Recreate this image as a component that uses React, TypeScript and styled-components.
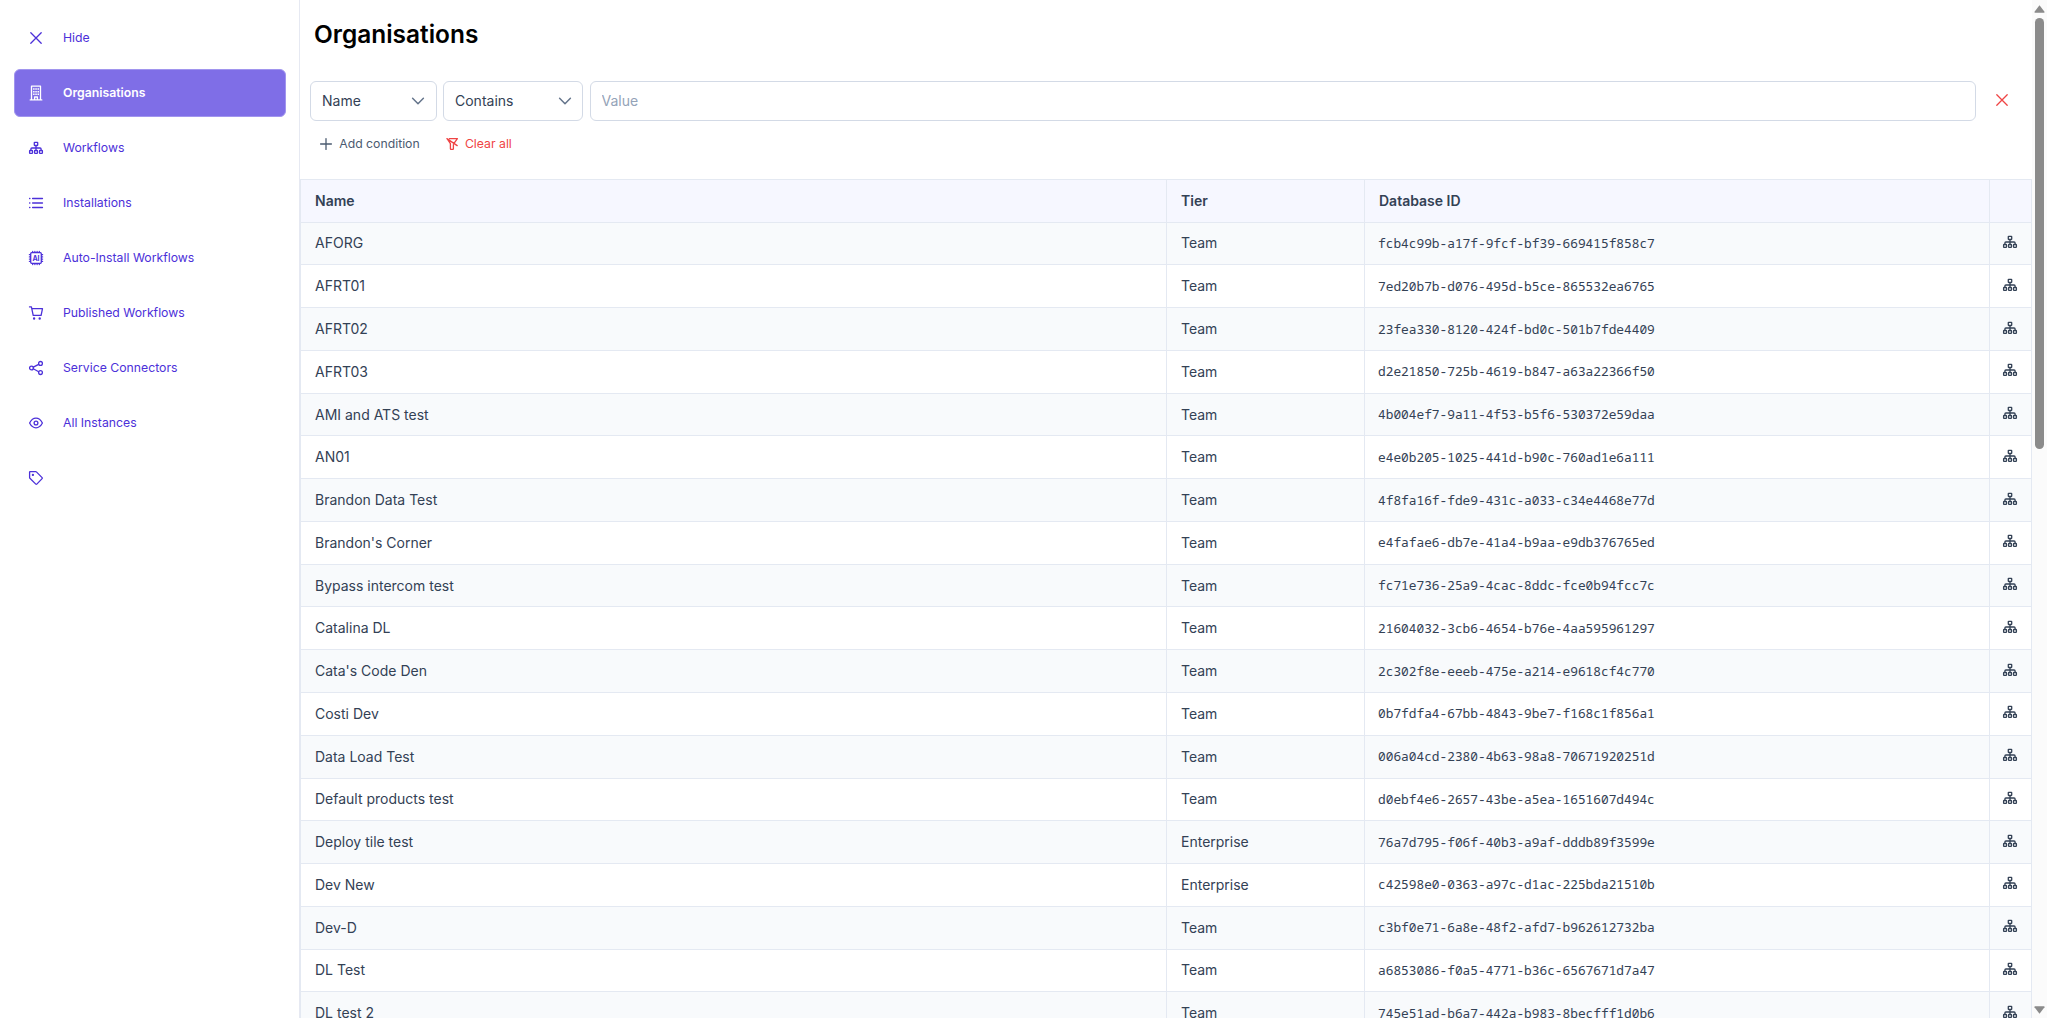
import React from 'react';
import styled, { createGlobalStyle } from 'styled-components';

const GlobalStyle = createGlobalStyle`
  *, *::before, *::after { box-sizing: border-box; }
  body {
    margin: 0;
    overflow: hidden;
    background: #fff;
    font-family: Inter, "Open Sans", sans-serif;
    font-size: 14px;
    color: #334155;
  }
`;

const Layout = styled.div`
  display: flex;
  height: 100vh;
  overflow: hidden;
`;

const Sidebar = styled.nav`
  flex: 0 0 300px;
  display: flex;
  flex-direction: column;
  gap: 6.5px;
  padding: 13.75px 13px 0 14px;
  border-right: 1px solid #e6e9f2;
`;

const NavItem = styled.a<{ $active?: boolean }>`
  display: flex;
  align-items: center;
  gap: 20px;
  height: 48.5px;
  padding: 0 14px;
  border: 1px solid ${(p) => (p.$active ? '#a195ee' : 'transparent')};
  border-radius: 6px;
  background: ${(p) => (p.$active ? '#7f6ee7' : 'transparent')};
  color: ${(p) => (p.$active ? '#fff' : '#4c30d9')};
  font-size: 12.25px;
  font-weight: ${(p) => (p.$active ? 600 : 400)};
  cursor: pointer;
`;

const NavLabel = styled.span`
  padding-bottom: 2px;
`;

const Icon = styled.svg<{ $size?: number }>`
  flex: none;
  display: block;
  width: ${(p) => p.$size ?? 14}px;
  height: ${(p) => p.$size ?? 14}px;
  fill: none;
  stroke: currentColor;
  stroke-width: 1.3;
  stroke-linecap: round;
  stroke-linejoin: round;
  overflow: visible;
`;

const ChipLabel = styled.text`
  fill: currentColor;
  stroke: none;
  font-size: 7px;
  font-weight: 700;
  text-anchor: middle;
`;

const Main = styled.main`
  flex: 1;
  min-width: 0;
  display: flex;
  flex-direction: column;
`;

const Title = styled.h1`
  margin: 0;
  padding: 19px 0 0 14px;
  height: 80.5px;
  font-size: 24.45px;
  font-weight: 600;
  line-height: 30px;
  color: #000;
`;

const FilterRow = styled.div`
  display: flex;
  align-items: center;
  gap: 6.5px;
  padding: 0 10px 0 10px;
`;

const Select = styled.div<{ $width: number }>`
  flex: none;
  display: flex;
  align-items: center;
  justify-content: space-between;
  width: ${(p) => p.$width}px;
  height: 40px;
  padding: 0 10.5px 0 11px;
  border: 1px solid #d3dae6;
  border-radius: 6px;
  color: #334155;
`;

const Chevron = styled(Icon)`
  color: #64748b;
  stroke-width: 1.5;
`;

const ValueInput = styled.input`
  flex: 1;
  min-width: 0;
  height: 40px;
  padding: 0 11px;
  border: 1px solid #d3dae6;
  border-radius: 6px;
  outline: none;
  background: #fff;
  font: inherit;
  color: #334155;
  &::placeholder { color: #94a3b8; opacity: 1; }
`;

const RemoveButton = styled.button`
  display: flex;
  align-items: center;
  justify-content: center;
  width: 40px;
  height: 40px;
  padding: 0 0 1px;
  border: 0;
  background: none;
  color: #ef4444;
`;

const Actions = styled.div`
  display: flex;
  align-items: center;
  gap: 26px;
  height: 58.5px;
  padding: 0 0 12px 20px;
`;

const TextButton = styled.button<{ $danger?: boolean }>`
  display: flex;
  align-items: center;
  gap: 7.2px;
  padding: 0;
  border: 0;
  background: none;
  font: inherit;
  font-size: 12.25px;
  color: ${(p) => (p.$danger ? '#ef4444' : '#4b5b70')};
`;

const Table = styled.div`
  flex: 1;
  min-height: 0;
  overflow: hidden;
  border: solid #e4e9f2;
  border-width: 1px 1px 0 1px;
`;

const Row = styled.div<{ $striped?: boolean }>`
  display: grid;
  grid-template-columns: 865px 198px 1fr 42px;
  height: 42.77px;
  border-top: 1px solid #e4e9f2;
  background: ${(p) => (p.$striped ? '#f8fafc' : '#fff')};
`;

const Cell = styled.div`
  display: flex;
  align-items: center;
  padding: 0 0 1px 14px;
  & + & { border-left: 1px solid #e4e9f2; }
`;

const HeaderRow = styled(Row)`
  height: 41.6px;
  border-top: 0;
  background: #f6f7ff;
  font-weight: 600;
  ${Cell} { padding-bottom: 0; }
`;

const IdCell = styled(Cell)`
  padding-left: 13px;
  font-family: "Noto Sans Mono", "DejaVu Sans Mono", monospace;
  font-size: 12.82px;
`;

const ActionCell = styled(Cell)`
  justify-content: center;
  padding: 0 1px 3px 0;
`;

const Scrollbar = styled.div`
  flex: 0 0 15px;
  display: flex;
  flex-direction: column;
  align-items: center;
  padding: 5px 0 4px;
  background: #fbfbfb;
`;

const Thumb = styled.div`
  width: 9px;
  height: 431px;
  margin: 5px 0 auto;
  border-radius: 5px;
  background: #8b8b8b;
`;

const Arrow = styled.svg`
  display: block;
  width: 11px;
  height: 8px;
  fill: #8b8b8b;
`;

const SitemapIcon = () => (
  <Icon viewBox="0 0 14 14">
    <rect x="5.3" y="1.3" width="3.4" height="3.2" rx=".4" />
    <path d="M7 4.6v4.8M1.900 9.3V8q0-1 1-1h8.200q1 0 1 1v1.300" />
    <rect x=".6" y="9.500" width="2.900" height="2.900" rx=".6" />
    <rect x="5.550" y="9.500" width="2.900" height="2.900" rx=".6" />
    <rect x="10.500" y="9.500" width="2.900" height="2.900" rx=".6" />
  </Icon>
);

const TimesIcon = () => (
  <Icon viewBox="0 0 14 14">
    <path d="M1.800 1.800l10.400 10.400M12.200 1.800L1.800 12.200" />
  </Icon>
);

const BuildingIcon = () => (
  <Icon viewBox="0 0 14 14">
    <path d="M1.200 13.900h11.600M2.500 13.600V.2h9v13.400M5.600 13.600v-2.600h2.800v2.600" />
    <path
      d="M4.100 2.200h1.500v1.500H4.100zM6.300 2.200h1.500v1.500H6.300zM8.500 2.200h1.500v1.500H8.500zM4.100 4.900h1.500v1.500H4.100zM6.300 4.900h1.500v1.500H6.300zM8.500 4.900h1.500v1.500H8.500zM4.100 7.600h1.500v1.500H4.100zM6.300 7.600h1.500v1.500H6.300zM8.500 7.600h1.500v1.500H8.500z"
      fill="currentColor"
      stroke="none"
    />
  </Icon>
);

const ListIcon = () => (
  <Icon viewBox="0 0 14 14">
    <path d="M3.600 2.500h9.900M3.600 7h9.900M3.600 11.500h9.900M.6 2.500h.3M.6 7h.3M.6 11.500h.3" />
  </Icon>
);

const ChipIcon = () => (
  <Icon viewBox="0 0 14 14">
    <rect x="1.700" y="1.700" width="10.600" height="10.600" rx="1" />
    <path d="M3.700.4v1M5.900.4v1M8.100.4v1M10.300.4v1M3.700 12.600v1M5.900 12.600v1M8.100 12.600v1M10.300 12.600v1M.4 3.700h1M.4 5.900h1M.4 8.100h1M.4 10.300h1M12.600 3.700h1M12.600 5.900h1M12.600 8.100h1M12.600 10.300h1" />
    <ChipLabel x="7" y="9.500">AI</ChipLabel>
  </Icon>
);

const CartIcon = () => (
  <Icon viewBox="0 0 14 14">
    <path d="M.5.9h1.900l1.800 8.500h7.700M2.900 2.700h10.600l-1.400 6.600" />
    <circle cx="5.100" cy="12.500" r=".55" fill="currentColor" />
    <circle cx="10.700" cy="12.500" r=".55" fill="currentColor" />
  </Icon>
);

const ShareIcon = () => (
  <Icon viewBox="0 0 14 14">
    <circle cx="2.500" cy="7" r="1.900" />
    <circle cx="11.500" cy="2.400" r="1.900" />
    <circle cx="11.500" cy="11.600" r="1.900" />
    <path d="M4.300 6.200l5.400-2.800M4.300 7.800l5.400 2.900" />
  </Icon>
);

const EyeIcon = () => (
  <Icon viewBox="0 0 14 14">
    <path d="M.6 7C2.200 3.900 4.400 2.200 7 2.200s4.800 1.700 6.400 4.800c-1.600 3.100-3.800 4.800-6.400 4.800S2.200 10.100.6 7z" />
    <circle cx="7" cy="7" r="1.900" />
  </Icon>
);

const TagIcon = () => (
  <Icon viewBox="0 0 14 14">
    <path d="M.6 1.100q0-.5.5-.5h5.600q.4 0 .7.300l5.700 5.700q.5.500 0 1l-5.300 5.500q-.5.500-1 0L.9 7.300q-.3-.3-.3-.7z" />
    <circle cx="3.900" cy="3.900" r=".5" fill="currentColor" />
  </Icon>
);

const PlusIcon = () => (
  <Icon viewBox="0 0 12 12" $size={12}>
    <path d="M6 .6v10.800M.6 6h10.800" />
  </Icon>
);

const FilterSlashIcon = () => (
  <Icon viewBox="0 0 12 12" $size={12}>
    <path d="M3.400.6h8L7.800 5.600M1.100.6l3.300 5v5.200q0 .6.600.6h1.800q.6 0 .6-.6V6.600M.9.600l10.300 7" />
  </Icon>
);

const ChevronDown = () => (
  <Chevron viewBox="0 0 14 14">
    <path d="M1.600 4.300L7 9.700l5.400-5.400" />
  </Chevron>
);

const navItems: { label: string; icon: React.ReactNode; active?: boolean }[] = [
  { label: 'Hide', icon: <TimesIcon /> },
  { label: 'Organisations', icon: <BuildingIcon />, active: true },
  { label: 'Workflows', icon: <SitemapIcon /> },
  { label: 'Installations', icon: <ListIcon /> },
  { label: 'Auto-Install Workflows', icon: <ChipIcon /> },
  { label: 'Published Workflows', icon: <CartIcon /> },
  { label: 'Service Connectors', icon: <ShareIcon /> },
  { label: 'All Instances', icon: <EyeIcon /> },
  { label: '', icon: <TagIcon /> },
];

const organisations: [string, string, string][] = [
  ['AFORG', 'Team', 'fcb4c99b-a17f-9fcf-bf39-669415f858c7'],
  ['AFRT01', 'Team', '7ed20b7b-d076-495d-b5ce-865532ea6765'],
  ['AFRT02', 'Team', '23fea330-8120-424f-bd0c-501b7fde4409'],
  ['AFRT03', 'Team', 'd2e21850-725b-4619-b847-a63a22366f50'],
  ['AMI and ATS test', 'Team', '4b004ef7-9a11-4f53-b5f6-530372e59daa'],
  ['AN01', 'Team', 'e4e0b205-1025-441d-b90c-760ad1e6a111'],
  ['Brandon Data Test', 'Team', '4f8fa16f-fde9-431c-a033-c34e4468e77d'],
  ["Brandon's Corner", 'Team', 'e4fafae6-db7e-41a4-b9aa-e9db376765ed'],
  ['Bypass intercom test', 'Team', 'fc71e736-25a9-4cac-8ddc-fce0b94fcc7c'],
  ['Catalina DL', 'Team', '21604032-3cb6-4654-b76e-4aa595961297'],
  ["Cata's Code Den", 'Team', '2c302f8e-eeeb-475e-a214-e9618cf4c770'],
  ['Costi Dev', 'Team', '0b7fdfa4-67bb-4843-9be7-f168c1f856a1'],
  ['Data Load Test', 'Team', '006a04cd-2380-4b63-98a8-70671920251d'],
  ['Default products test', 'Team', 'd0ebf4e6-2657-43be-a5ea-1651607d494c'],
  ['Deploy tile test', 'Enterprise', '76a7d795-f06f-40b3-a9af-dddb89f3599e'],
  ['Dev New', 'Enterprise', 'c42598e0-0363-a97c-d1ac-225bda21510b'],
  ['Dev-D', 'Team', 'c3bf0e71-6a8e-48f2-afd7-b962612732ba'],
  ['DL Test', 'Team', 'a6853086-f0a5-4771-b36c-6567671d7a47'],
  ['DL test 2', 'Team', '745e51ad-b6a7-442a-b983-8becfff1d0b6'],
];

export default function App() {
  return (
    <>
      <GlobalStyle />
      <Layout>
        <Sidebar>
          {navItems.map((item, i) => (
            <NavItem key={i} $active={item.active}>
              {item.icon}
              <NavLabel>{item.label}</NavLabel>
            </NavItem>
          ))}
        </Sidebar>
        <Main>
          <Title>Organisations</Title>
          <FilterRow>
            <Select $width={126.5}>
              Name
              <ChevronDown />
            </Select>
            <Select $width={140}>
              Contains
              <ChevronDown />
            </Select>
            <ValueInput placeholder="Value" />
            <RemoveButton aria-label="Remove">
              <TimesIcon />
            </RemoveButton>
          </FilterRow>
          <Actions>
            <TextButton>
              <PlusIcon />
              Add condition
            </TextButton>
            <TextButton $danger>
              <FilterSlashIcon />
              Clear all
            </TextButton>
          </Actions>
          <Table>
            <HeaderRow>
              <Cell>Name</Cell>
              <Cell>Tier</Cell>
              <Cell>Database ID</Cell>
              <Cell />
            </HeaderRow>
            {organisations.map(([name, tier, id], i) => (
              <Row key={id} $striped={i % 2 === 0}>
                <Cell>{name}</Cell>
                <Cell>{tier}</Cell>
                <IdCell>{id}</IdCell>
                <ActionCell>
                  <SitemapIcon />
                </ActionCell>
              </Row>
            ))}
          </Table>
        </Main>
        <Scrollbar>
          <Arrow viewBox="0 0 11 8">
            <path d="M5.500 0.300L10.500 6.800q.3.900-.6.900H1.100q-.9 0-.6-.9z" />
          </Arrow>
          <Thumb />
          <Arrow viewBox="0 0 11 8">
            <path d="M5.500 7.700L10.500 1.200q.3-.9-.6-.9H1.100q-.9 0-.6.900z" />
          </Arrow>
        </Scrollbar>
      </Layout>
    </>
  );
}
